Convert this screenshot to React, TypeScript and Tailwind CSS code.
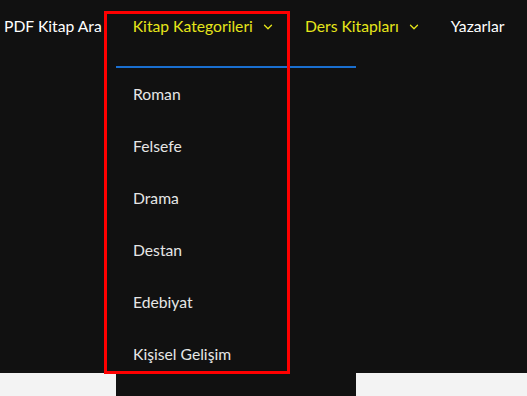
import { ChevronDown } from "lucide-react";

const categories = ["Roman", "Felsefe", "Drama", "Destan", "Edebiyat", "Kişisel Gelişim"];

function NavItem({ label, active, dropdown }: { label: string; active?: boolean; dropdown?: boolean }) {
  return (
    <div className={`flex items-center gap-[8px] ${active ? "text-[#e6e61a]" : "text-white"}`}>
      <span>{label}</span>
      {dropdown && <ChevronDown className="h-[14px] w-[14px]" strokeWidth={2.2} />}
    </div>
  );
}

export default function App() {
  return (
    <div className="relative h-[396px] w-[527px] overflow-hidden bg-[#f3f3f3] font-['Lato','Open_Sans',sans-serif] text-[15.7px]">
      <header className="h-[373px] bg-[#111111]">
        <nav className="flex h-[55px] items-center pb-[1px] pl-[4px]">
          <NavItem label="PDF Kitap Ara" />
          <div className="ml-[31px]"><NavItem label="Kitap Kategorileri" active dropdown /></div>
          <div className="ml-[30px]"><NavItem label="Ders Kitapları" active dropdown /></div>
          <div className="ml-[30px]"><NavItem label="Yazarlar" /></div>
        </nav>
      </header>

      <div className="absolute left-[116px] top-[66px] h-[340px] w-[240px] border-t-2 border-[#1a6fd0] bg-[#111111]">
        <ul className="pt-[15px]">
          {categories.map((c) => (
            <li key={c} className="flex h-[52px] items-start pl-[17px] text-[#e6e6e6]">
              {c}
            </li>
          ))}
        </ul>
      </div>

      <div className="pointer-events-none absolute left-[104px] top-[11px] h-[363px] w-[186px] border-[3px] border-[#ff0000]" />
    </div>
  );
}
